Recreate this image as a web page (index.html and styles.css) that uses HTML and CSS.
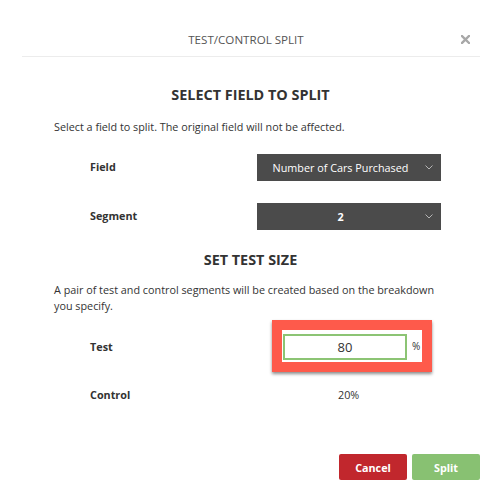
FILE: index.html
```
<!DOCTYPE html>
<html>
<head>
<meta charset="utf-8">
<link rel="stylesheet" href="styles.css">
</head>
<body>
<div class="modal">
  <header class="modal-header">
    <h1 class="modal-title">TEST/CONTROL SPLIT</h1>
    <button class="close" aria-label="Close">
      <svg width="9" height="9" viewBox="0 0 9 9"><path d="M1 1L8 8M8 1L1 8" stroke="#a8a8a8" stroke-width="2.4" stroke-linecap="square"/></svg>
    </button>
  </header>
  <main class="modal-body">
    <h2 class="section-title first">SELECT FIELD TO SPLIT</h2>
    <p class="desc">Select a field to split. The original field will not be affected.</p>
    <div class="form-row row-field">
      <span class="label">Field</span>
      <div class="select">
        <span class="select-text">Number of Cars Purchased</span>
        <svg class="chevron" width="8" height="5" viewBox="0 0 8 5"><path d="M0.5 0.5L4 4L7.5 0.5" fill="none" stroke="#b5b5b5" stroke-width="1"/></svg>
      </div>
    </div>
    <div class="form-row row-segment">
      <span class="label">Segment</span>
      <div class="select">
        <span class="select-text">2</span>
        <svg class="chevron" width="8" height="5" viewBox="0 0 8 5"><path d="M0.5 0.5L4 4L7.5 0.5" fill="none" stroke="#b5b5b5" stroke-width="1"/></svg>
      </div>
    </div>
    <h2 class="section-title second">SET TEST SIZE</h2>
    <p class="desc desc-two">A pair of test and control segments will be created based on the breakdown you specify.</p>
    <div class="form-row row-test">
      <span class="label">Test</span>
      <div class="value-cell">
        <div class="input">80</div>
        <span class="unit">%</span>
        <div class="annotation"></div>
      </div>
    </div>
    <div class="form-row row-control">
      <span class="label">Control</span>
      <span class="control-value">20%</span>
    </div>
  </main>
  <footer class="modal-footer">
    <button class="btn btn-cancel">Cancel</button>
    <button class="btn btn-split">Split</button>
  </footer>
</div>
</body>
</html>
```
FILE: styles.css
```
* { box-sizing: border-box; }
html, body {
  margin: 0;
  padding: 0;
  background: #fff;
}
body {
  font-family: "Open Sans", "Liberation Sans", sans-serif;
  color: #333;
  width: 501px;
  height: 502px;
  overflow: hidden;
}
.modal {
  width: 501px;
}
.modal-header {
  position: relative;
  margin: 0 21px 0 22px;
  padding: 30px 0 6px;
  border-bottom: 1px solid #ececec;
  display: flex;
  justify-content: center;
}
.modal-title {
  margin: 0;
  font-size: 11.6px;
  font-weight: 400;
  line-height: 20px;
  color: #555;
  padding-right: 10px;
}
.close {
  position: absolute;
  right: 10px;
  top: 35px;
  border: 0;
  background: none;
  padding: 0;
  width: 9px;
  height: 9px;
  display: flex;
}
.modal-body {
  padding: 0 54px;
}
.section-title {
  margin: 0;
  text-align: center;
  font-size: 14.4px;
  font-weight: 700;
  line-height: 20px;
  color: #333;
}
.section-title.first { margin-top: 28px; }
.section-title.second { margin-top: 20px; }
.desc {
  margin: 13px 0 0;
  font-size: 10.8px;
  line-height: 18px;
  color: #333;
}
.desc.desc-two {
  margin-top: 12px;
  line-height: 16px;
}
.form-row {
  display: grid;
  grid-template-columns: 167px 184px;
  align-items: center;
  padding-left: 36px;
  height: 27px;
}
.row-field { margin-top: 18px; }
.row-segment { margin-top: 22px; }
.row-test { margin-top: 20px; height: 26px; }
.row-control { margin-top: 22px; height: 26px; }
.label {
  font-size: 10.8px;
  font-weight: 700;
  color: #333;
  margin-top: -2px;
}
.select {
  position: relative;
  height: 27px;
  background: #4b4b4b;
  display: flex;
  align-items: center;
  justify-content: center;
  padding-right: 17px;
}
.select-text {
  color: #fff;
  font-size: 10.8px;
}
.row-segment .select-text { font-weight: 700; }
.chevron {
  position: absolute;
  right: 8px;
  top: 11px;
}
.value-cell {
  position: relative;
  display: flex;
  align-items: center;
  padding-left: 26px;
  height: 26px;
}
.input {
  width: 124px;
  height: 26px;
  border: 2px solid #8cc474;
  background: #fff;
  display: flex;
  align-items: center;
  justify-content: center;
  font-size: 13px;
  color: #333;
}
.unit {
  margin-left: 5px;
  font-size: 10px;
  color: #333;
  margin-top: -3px;
}
.annotation {
  position: absolute;
  left: 15px;
  top: -14px;
  width: 160px;
  height: 52px;
  border: 10px solid #fe5a4b;
  box-shadow: 0 2px 3px rgba(0, 0, 0, 0.45);
  pointer-events: none;
}
.control-value {
  padding-left: 81px;
  font-size: 10.8px;
  color: #333;
  margin-top: -1px;
}
.modal-footer {
  display: flex;
  justify-content: flex-end;
  gap: 5px;
  margin-top: 46px;
  padding-right: 21px;
}
.btn {
  width: 68px;
  height: 26px;
  border: 0;
  border-radius: 2px;
  color: #fff;
  font-family: "Open Sans", "Liberation Sans", sans-serif;
  font-size: 10.8px;
  font-weight: 700;
  padding: 0;
}
.btn-cancel { background: #c1272d; }
.btn-split { background: #88c172; }
```
